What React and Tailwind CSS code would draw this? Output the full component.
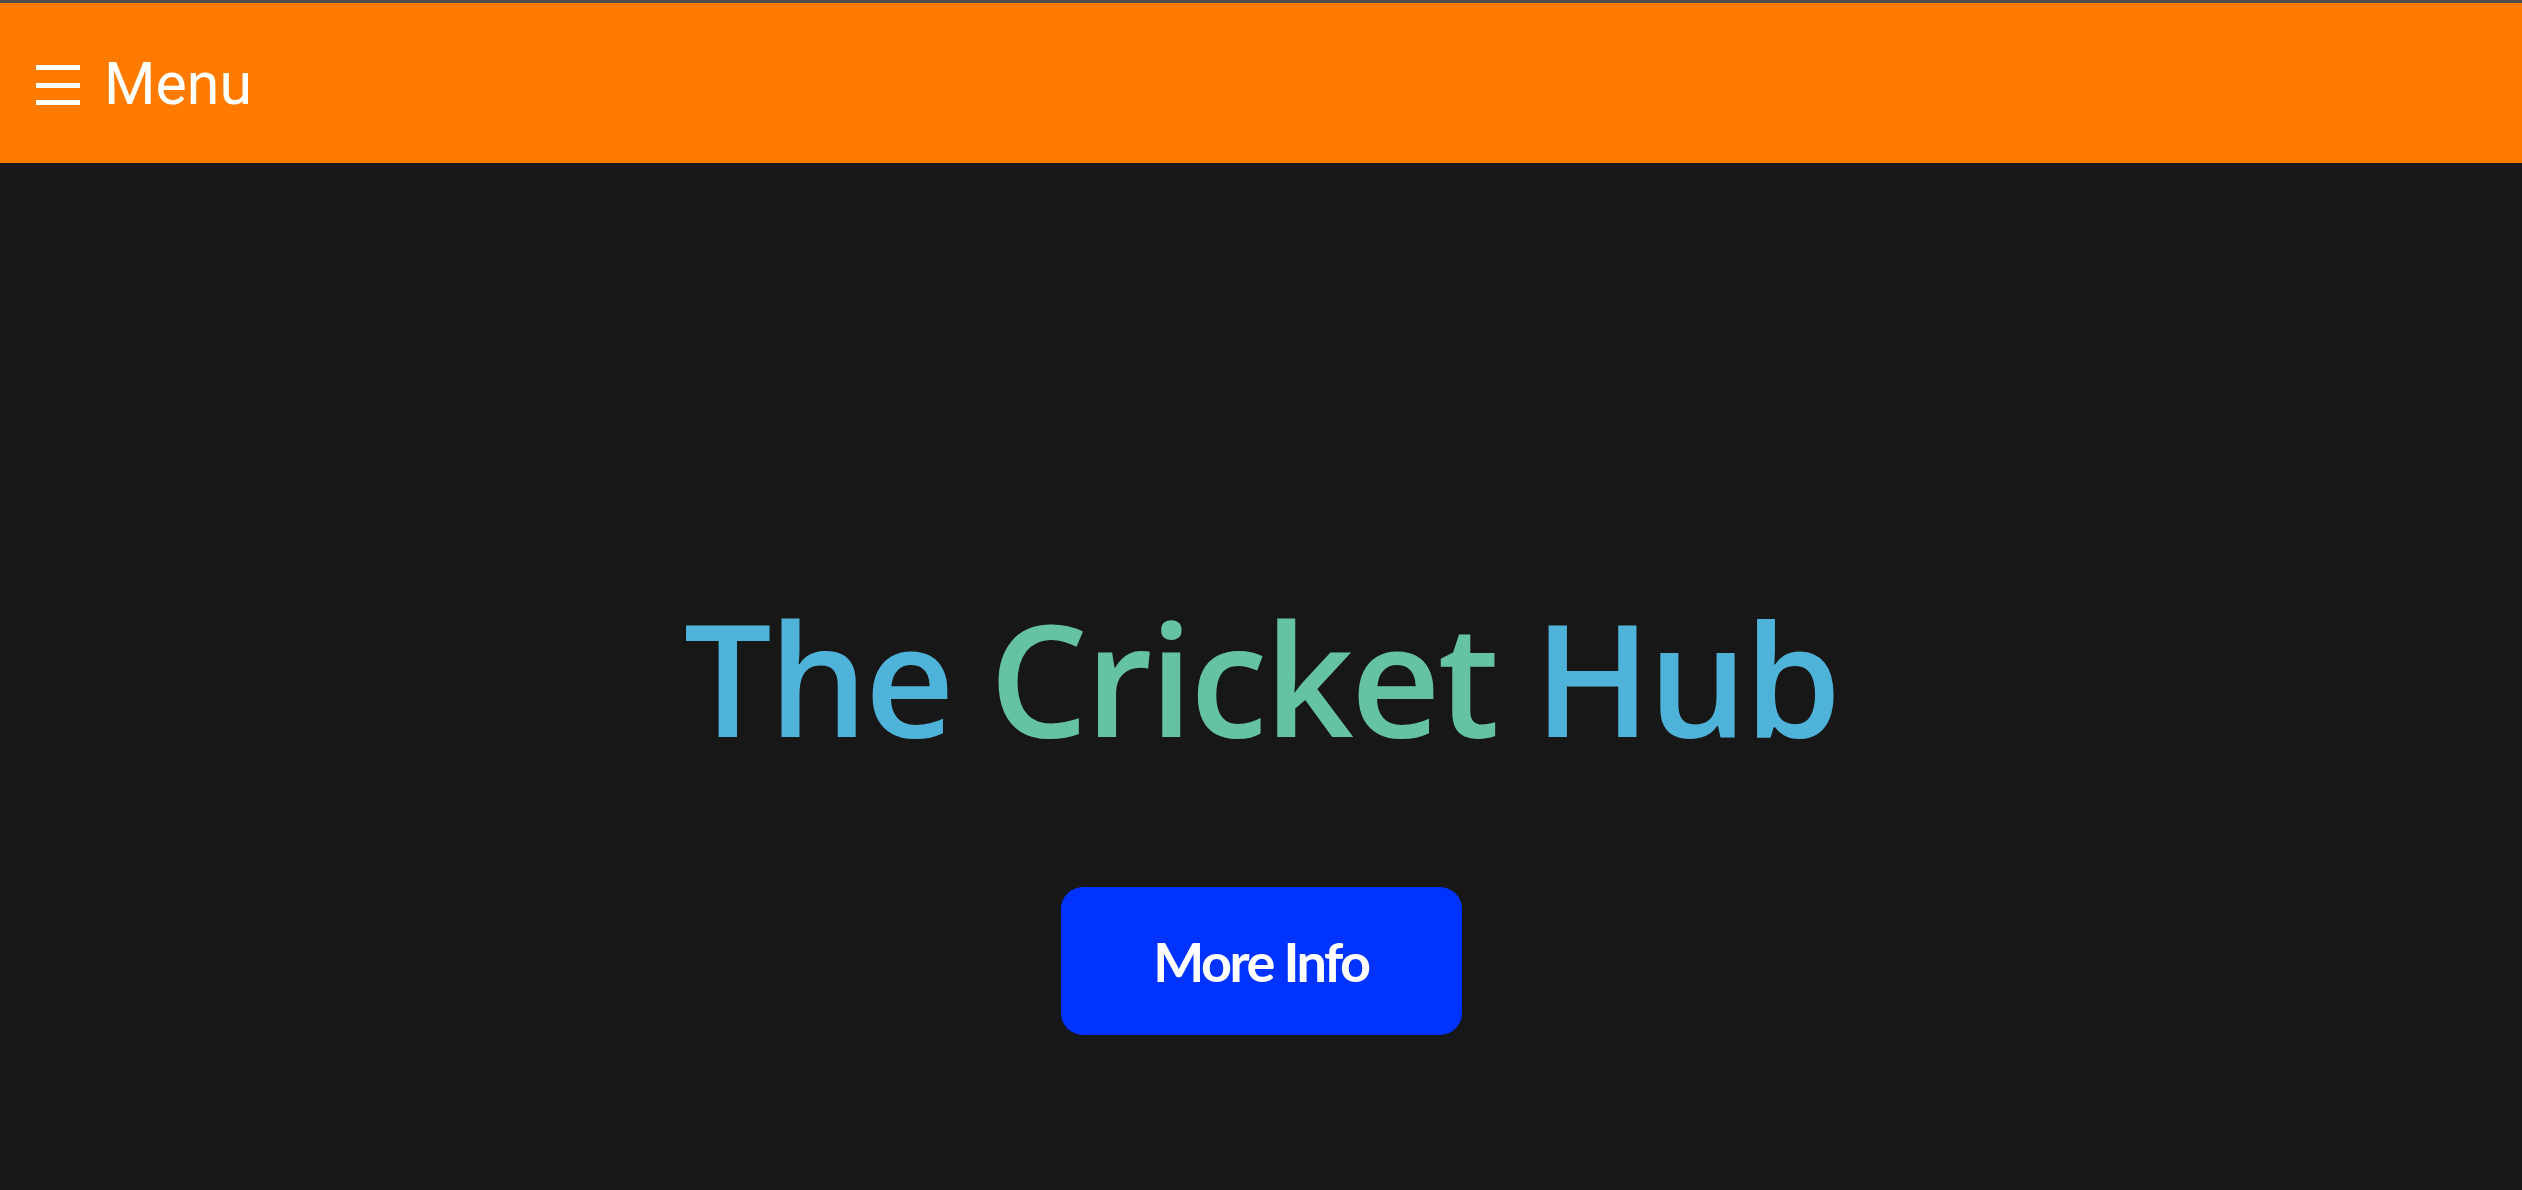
export default function App() {
  return (
    <div className="min-h-[1190px] w-full bg-[#171717] flex flex-col">
      <div className="h-[3px] bg-[#4d4d4d]" />
      <header className="h-[160px] bg-[#ff7b00] flex items-center pl-[36px]">
        <div className="flex flex-col justify-between w-[44px] h-[40px] mt-[4px]">
          <span className="block h-[5px] bg-white" />
          <span className="block h-[5px] bg-white" />
          <span className="block h-[5px] bg-white" />
        </div>
        <span
          className="ml-[24px] text-white text-[59px] leading-none"
          style={{ fontFamily: "Roboto, 'Liberation Sans', sans-serif" }}
        >
          Menu
        </span>
      </header>
      <main className="flex flex-col items-center pt-[436px]">
        <h1
          className="text-[156px] leading-none font-semibold tracking-[-3px] whitespace-nowrap"
          style={{ fontFamily: "'Open Sans', 'Noto Sans', sans-serif" }}
        >
          <span className="text-[#4fb3d9]">The </span>
          <span className="text-[#66c2a5]">Cricket </span>
          <span className="text-[#4fb3d9]">Hub</span>
        </h1>
        <button
          className="mt-[132px] w-[401px] h-[148px] rounded-[22px] bg-[#0033ff] text-white text-[54px] font-bold tracking-[-2.5px] flex items-center justify-center"
          style={{ fontFamily: "Lato, 'Open Sans', sans-serif" }}
        >
          More Info
        </button>
      </main>
    </div>
  );
}
